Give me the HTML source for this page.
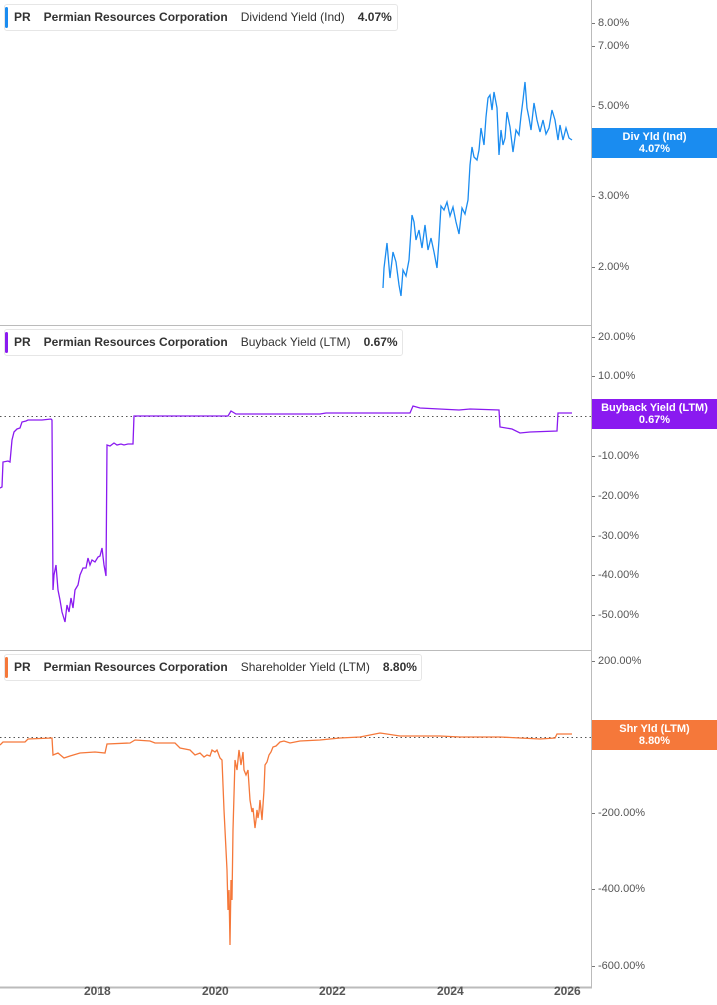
<!DOCTYPE html>
<html><head><meta charset="utf-8">
<style>
body{margin:0;width:717px;height:1005px;background:#fff;font-family:"Liberation Sans",Arial,sans-serif;overflow:hidden;position:relative}
.hdr{position:absolute;left:4px;height:25px;border:1px solid #e6e6e6;border-radius:3px;background:#fff;font-size:12px;font-weight:bold;color:#333;line-height:25px;padding-left:9px;white-space:nowrap}
.hdr .bar{position:absolute;left:0;top:2px;bottom:2px;width:3px;border-radius:2px}
.hdr span{margin-right:13px}
.hdr .n{font-weight:normal;color:#333}
.tag{position:absolute;left:592px;width:125px;color:#fff;font-size:11px;font-weight:bold;text-align:center;line-height:12px;padding-top:3px;box-sizing:border-box}
.yl{position:absolute;left:598px;font-size:11px;color:#555}
.xl{position:absolute;top:984px;font-size:12px;font-weight:bold;color:#555}
</style></head><body>
<svg width="717" height="1005" style="position:absolute;left:0;top:0">
<g stroke="#bbb" stroke-width="1">
<line x1="0" y1="325.5" x2="591" y2="325.5"/>
<line x1="0" y1="650.5" x2="591" y2="650.5"/>
<line x1="591.5" y1="0" x2="591.5" y2="988"/>
<line x1="0" y1="987.5" x2="592" y2="987.5" stroke-width="2"/>
<line x1="98.5" y1="988" x2="98.5" y2="993"/><line x1="216.5" y1="988" x2="216.5" y2="993"/><line x1="333.5" y1="988" x2="333.5" y2="993"/><line x1="451.5" y1="988" x2="451.5" y2="993"/><line x1="568.5" y1="988" x2="568.5" y2="993"/>
</g>
<g stroke="#777" stroke-width="1">
<line x1="592" y1="23.5" x2="595" y2="23.5"/><line x1="592" y1="46.5" x2="595" y2="46.5"/><line x1="592" y1="106.5" x2="595" y2="106.5"/><line x1="592" y1="196.5" x2="595" y2="196.5"/><line x1="592" y1="267.5" x2="595" y2="267.5"/>
<line x1="592" y1="337.5" x2="595" y2="337.5"/><line x1="592" y1="376.5" x2="595" y2="376.5"/><line x1="592" y1="456.5" x2="595" y2="456.5"/><line x1="592" y1="496.5" x2="595" y2="496.5"/><line x1="592" y1="536.5" x2="595" y2="536.5"/><line x1="592" y1="575.5" x2="595" y2="575.5"/><line x1="592" y1="615.5" x2="595" y2="615.5"/>
<line x1="592" y1="661.5" x2="595" y2="661.5"/><line x1="592" y1="813.5" x2="595" y2="813.5"/><line x1="592" y1="889.5" x2="595" y2="889.5"/><line x1="592" y1="966.5" x2="595" y2="966.5"/>
</g>
<g stroke="#555" stroke-width="1" stroke-dasharray="1.5,3">
<line x1="0" y1="416.5" x2="591" y2="416.5"/>
<line x1="0" y1="737.5" x2="591" y2="737.5"/>
</g>
<polyline fill="none" stroke="#1a8cf0" stroke-width="1.3" points="383,288 384,268 387,243 390,278 393,252 396,262 399,285 401,296 403,270 406,276 409,260 412,215 414,222 416,240 419,230 422,248 425,225 428,250 431,238 434,252 437,268 439,240 441,206 444,210 447,202 450,216 453,207 456,222 459,234 462,208 465,214 468,200 470,165 472,147 474,157 477,160 479,150 481,128 484,145 486,117 488,98 490,95 492,110 494,92 497,108 499,155 501,130 503,145 505,138 507,112 510,127 513,152 516,130 519,135 521,116 523,100 525,82 527,108 529,118 531,130 534,103 537,120 540,132 543,120 546,134 549,128 552,110 555,120 558,140 560,125 563,140 566,128 569,138 572,140"/>
<polyline fill="none" stroke="#8a1af0" stroke-width="1.3" points="0,488 2,487 3,462 8,461 10,462 12,440 14,432 17,429 20,428 22,422 26,421 28,420 42,420 51,419 52,420 53,590 54,575 56,565 58,590 60,600 62,612 65,622 67,605 69,612 71,598 73,608 75,590 78,585 80,575 83,568 86,568 88,558 90,565 92,560 95,562 98,557 100,556 102,548 104,565 106,576 107,445 110,446 114,443 117,445 121,444 124,445 128,444 133,444 134,416 228,416 231,411 236,414 320,414 326,413 410,413 413,406 420,408 459,410 470,409 499,410 500,427 512,429 520,433 530,432 557,431 558,413 572,413"/>
<polyline fill="none" stroke="#f5783a" stroke-width="1.3" points="0,745 3,742 25,742 28,739 52,738 53,755 58,753 64,758 70,756 80,753 95,752 105,753 107,744 130,743 135,740 150,741 155,743 175,743 180,748 190,750 195,755 200,753 204,757 207,755 210,756 212,750 215,752 217,750 220,758 222,760 224,810 225,830 227,870 228,910 229,890 230,945 231,880 232,900 233,830 235,760 237,770 239,750 241,765 243,752 244,770 246,775 248,770 250,800 252,812 253,808 255,828 256,820 257,810 258,818 259,812 260,800 262,820 264,790 265,765 267,762 269,755 271,752 273,747 276,746 280,742 284,741 290,743 300,741 320,740 340,738 360,737 380,733 400,736 420,736 440,736 460,737 480,737 500,737 520,738 540,739 555,738 557,734 572,734"/>
</svg>
<div class="hdr" style="top:4px;width:383px"><div class="bar" style="background:#1a8cf0"></div><span>PR</span><span>Permian Resources Corporation</span><span class="n">Dividend Yield (Ind)</span><span>4.07%</span></div>
<div class="hdr" style="top:329px;width:388px"><div class="bar" style="background:#8a1af0"></div><span>PR</span><span>Permian Resources Corporation</span><span class="n">Buyback Yield (LTM)</span><span>0.67%</span></div>
<div class="hdr" style="top:654px;width:407px"><div class="bar" style="background:#f5783a"></div><span>PR</span><span>Permian Resources Corporation</span><span class="n">Shareholder Yield (LTM)</span><span>8.80%</span></div>

<div class="yl" style="top:17px">8.00%</div>
<div class="yl" style="top:40px">7.00%</div>
<div class="yl" style="top:100px">5.00%</div>
<div class="yl" style="top:190px">3.00%</div>
<div class="yl" style="top:261px">2.00%</div>
<div class="tag" style="top:128px;height:30px;background:#1a8cf0">Div Yld (Ind)<br>4.07%</div>

<div class="yl" style="top:331px">20.00%</div>
<div class="yl" style="top:370px">10.00%</div>
<div class="yl" style="top:450px">-10.00%</div>
<div class="yl" style="top:490px">-20.00%</div>
<div class="yl" style="top:530px">-30.00%</div>
<div class="yl" style="top:569px">-40.00%</div>
<div class="yl" style="top:609px">-50.00%</div>
<div class="tag" style="top:399px;height:30px;background:#8a1af0">Buyback Yield (LTM)<br>0.67%</div>

<div class="yl" style="top:655px">200.00%</div>
<div class="yl" style="top:807px">-200.00%</div>
<div class="yl" style="top:883px">-400.00%</div>
<div class="yl" style="top:960px">-600.00%</div>
<div class="tag" style="top:720px;height:30px;background:#f5783a">Shr Yld (LTM)<br>8.80%</div>

<div class="xl" style="left:84px">2018</div>
<div class="xl" style="left:202px">2020</div>
<div class="xl" style="left:319px">2022</div>
<div class="xl" style="left:437px">2024</div>
<div class="xl" style="left:554px">2026</div>
</body></html>
